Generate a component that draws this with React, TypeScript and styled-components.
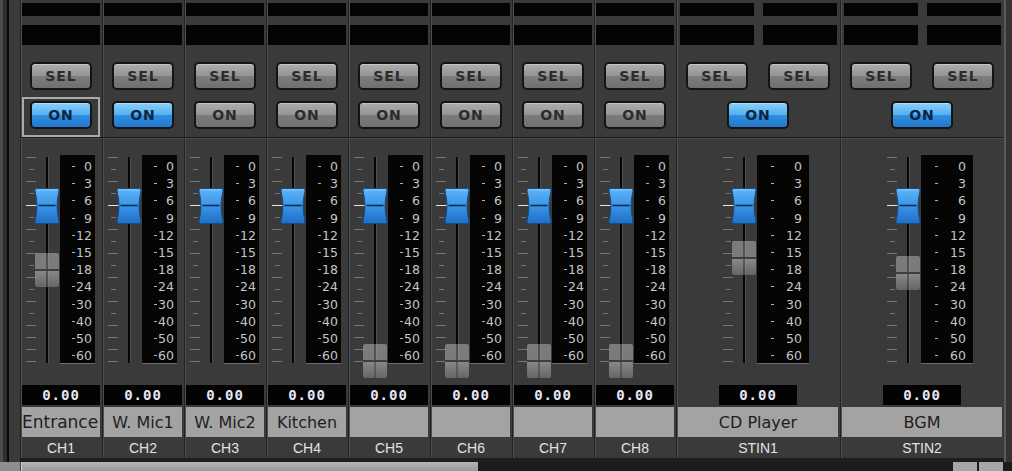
import React from 'react'
import styled, { createGlobalStyle } from 'styled-components'

const GlobalStyle = createGlobalStyle`
  html, body {
    margin: 0;
    padding: 0;
    background: #2a2a2a;
  }
  body {
    font-family: 'DejaVu Sans', sans-serif;
  }
`

const Console = styled.div`
  width: 1012px;
  height: 471px;
  overflow: hidden;
  display: flex;
  flex-direction: column;
  background: #2a2a2a;
`

const Strips = styled.div`
  display: flex;
  height: 462px;
  flex: none;
`

const LeftEdge = styled.div`
  width: 20px;
  flex: none;
  background: linear-gradient(to right, #4c4c4c 0 3px, #2e2e2e 3px 7px, #0a0a0a 7px 9px, #3a3a3a 9px);
`

const RightEdge = styled.div`
  flex: 1;
  background: linear-gradient(to right, #5a5a5a 0 2px, #333 2px);
`

const Strip = styled.div<{ $wide?: boolean }>`
  width: ${p => (p.$wide ? 164 : 82)}px;
  flex: none;
  display: flex;
  flex-direction: column;
  background: #3a3a3a;
  box-shadow: inset 1px 0 0 #232323, inset 2px 0 0 #4e4e4e;
`

const MeterRow = styled.div<{ $wide?: boolean; $h: number; $top: number }>`
  display: flex;
  gap: 9px;
  padding: 0 ${p => (p.$wide ? 3 : 2)}px 0 ${p => (p.$wide ? 4 : 2)}px;
  height: ${p => p.$h}px;
  margin-top: ${p => p.$top}px;
`

const Meter = styled.div`
  flex: 1;
  background: #040404;
`

const ButtonArea = styled.div`
  height: 92px;
  padding-top: 17px;
  box-sizing: border-box;
  display: flex;
  flex-direction: column;
  align-items: center;
`

const SelRow = styled.div`
  align-self: stretch;
  display: grid;
  grid-auto-flow: column;
  grid-auto-columns: 1fr;
  justify-items: center;
`

const PadButton = styled.div<{ $on?: boolean }>`
  width: 62px;
  height: 28px;
  box-sizing: border-box;
  border: 2px solid #141414;
  border-radius: 5px;
  display: flex;
  align-items: center;
  justify-content: center;
  font: bold 14px 'DejaVu Sans', sans-serif;
  letter-spacing: 1px;
  color: ${p => (p.$on ? '#0b2643' : '#2c2c2c')};
  background: ${p =>
    p.$on
      ? 'linear-gradient(#8ad0fa, #55b0f2 48%, #2f8fe2 52%, #2378cc)'
      : 'linear-gradient(#adadad, #959595 48%, #7c7c7c 52%, #707070)'};
  box-shadow: inset 0 1px 0 rgba(255, 255, 255, 0.3);
`

const OnSlot = styled.div<{ $focus?: boolean }>`
  margin-top: 7px;
  width: 78px;
  height: 40px;
  box-sizing: border-box;
  border: 2px solid ${p => (p.$focus ? '#a9a9a9' : 'transparent')};
  display: flex;
  justify-content: center;
  padding-top: 2px;
`

const Divider = styled.div`
  height: 2px;
  background: linear-gradient(#1c1c1c 0 1px, #474747 1px);
`

const FaderArea = styled.div`
  height: 241px;
  display: grid;
  grid-template-columns: 1fr 1fr;
`

const FaderSide = styled.div`
  position: relative;
  display: flex;
  justify-content: flex-end;
  padding: 18px 13px 0 0;
`

const Ticks = styled.div`
  width: 10px;
  margin-right: 10px;
  display: flex;
  flex-direction: column;
  align-items: center;
  gap: 11px;
`

const Tick = styled.div<{ $long?: boolean; $lit?: boolean }>`
  height: 1px;
  width: ${p => (p.$lit ? 12 : p.$long ? 10 : 5)}px;
  align-self: ${p => (p.$lit ? 'flex-start' : 'center')};
  background: ${p => (p.$lit ? '#e4e4e4' : '#767676')};
`

const Track = styled.div`
  width: 2px;
  height: 206px;
  background: #060606;
  box-shadow: 1px 0 0 #505050;
`

const Cap = styled.svg`
  position: absolute;
  right: 1px;
  width: 26px;
  height: 36px;
  margin-top: -18px;
`

const Ghost = styled.div`
  position: absolute;
  right: 2px;
  width: 24px;
  height: 34px;
  margin-top: -17px;
  border-radius: 2px;
  background:
    linear-gradient(to right, transparent 11px, rgba(60, 60, 60, 0.5) 11px 13px, transparent 13px),
    linear-gradient(rgba(180, 180, 180, 0.55), rgba(150, 150, 150, 0.7) 48%, #3e3e3e 48% 53%, rgba(170, 170, 170, 0.7) 53%, rgba(130, 130, 130, 0.6));
  filter: blur(0.6px);
`

const ScaleSide = styled.div`
  padding-top: 16px;
  margin-left: -1px;
`

const Scale = styled.div<{ $w: number }>`
  width: ${p => p.$w}px;
  height: 209px;
  box-sizing: border-box;
  padding-top: 3px;
  background: #050505;
  border-bottom: 1px solid #6c6c6c;
`

const ScaleRow = styled.div<{ $dash: number; $pad: number }>`
  height: 17.2px;
  display: flex;
  align-items: center;
  padding: 0 ${p => p.$pad}px 0 ${p => p.$dash}px;
  font: 12.5px 'DejaVu Sans', sans-serif;
  color: #c4c4c4;
`

const Dash = styled.span`
  width: 3px;
  height: 1px;
  background: #b0b0b0;
`

const Num = styled.span`
  margin-left: auto;
`

const ValueBox = styled.div`
  margin: 5px auto 0;
  width: 78px;
  height: 20px;
  background: #030303;
  display: flex;
  align-items: center;
  justify-content: center;
  font: bold 14px 'DejaVu Sans Mono', monospace;
  color: #e6e6f4;
  letter-spacing: 1px;
`

const NameBox = styled.div`
  margin: 2px 2px 0 2px;
  height: 30px;
  background: #a3a3a3;
  display: flex;
  align-items: center;
  justify-content: center;
  overflow: hidden;
  white-space: nowrap;
  font: 16px 'DejaVu Sans', sans-serif;
  color: #1e1e1e;
`

const NameText = styled.span<{ $left?: boolean }>`
  ${p => (p.$left ? 'margin-right: auto; font-size: 17px;' : '')}
`

const Label = styled.div`
  height: 21px;
  display: flex;
  align-items: center;
  justify-content: center;
  font: 14px 'Liberation Sans', sans-serif;
  color: #e2e2e2;
`

const StripFoot = styled.div`
  height: 4px;
  background: #1e1e1e;
`

const ScrollBar = styled.div`
  height: 9px;
  flex: none;
  display: flex;
  background: #1c1c1c;
`

const ScrollStart = styled.div`
  width: 20px;
  background: #8e8e8e;
  border-right: 1px solid #444;
`

const Thumb = styled.div`
  width: 457px;
  background: linear-gradient(#b6b6b6, #9a9a9a);
  box-shadow: inset 1px 0 0 #d0d0d0;
`

const ScrollGap = styled.div<{ $w?: number }>`
  flex: ${p => (p.$w ? 'none' : '1')};
  width: ${p => p.$w ?? 0}px;
`

const ScrollBtn = styled.div`
  width: 24px;
  margin-left: 2px;
  background: #a6a6a6;
`

type Channel = {
  label: string
  name: string
  on: boolean
  focus?: boolean
  wide?: boolean
  fader: number
  ghost?: number
}

const channels: Channel[] = [
  { label: 'CH1', name: 'Entrance', on: true, focus: true, fader: 67, ghost: 131 },
  { label: 'CH2', name: 'W. Mic1', on: true, fader: 67 },
  { label: 'CH3', name: 'W. Mic2', on: false, fader: 67 },
  { label: 'CH4', name: 'Kitchen', on: false, fader: 67 },
  { label: 'CH5', name: '', on: false, fader: 67, ghost: 222 },
  { label: 'CH6', name: '', on: false, fader: 67, ghost: 222 },
  { label: 'CH7', name: '', on: false, fader: 67, ghost: 222 },
  { label: 'CH8', name: '', on: false, fader: 67, ghost: 222 },
  { label: 'STIN1', name: 'CD Player', on: true, wide: true, fader: 67, ghost: 119 },
  { label: 'STIN2', name: 'BGM', on: true, wide: true, fader: 67, ghost: 134 },
]

const marks = ['0', '3', '6', '9', '12', '15', '18', '24', '30', '40', '50', '60']

const FaderCap = ({ y }: { y: number }) => (
  <Cap viewBox="0 0 26 36" style={{ top: y }}>
    <defs>
      <linearGradient id="capFill" x1="0" y1="0" x2="0" y2="1">
        <stop offset="0" stopColor="#5fb4f6" />
        <stop offset="0.45" stopColor="#3c98ea" />
        <stop offset="1" stopColor="#1e6fc6" />
      </linearGradient>
    </defs>
    <path
      d="M2.5 0.5 H23.5 Q25.5 0.5 25 3 Q21 18 25 33 Q25.5 35.5 23.5 35.5 H2.5 Q0.5 35.5 1 33 Q5 18 1 3 Q0.5 0.5 2.5 0.5 Z"
      fill="url(#capFill)"
      stroke="#174c86"
    />
    <path d="M4.5 17.5 H21.5" stroke="#0b2b52" strokeWidth="1.6" />
    <path d="M3 2 H23" stroke="#9ad4fb" strokeWidth="1" opacity="0.7" />
  </Cap>
)

const ChannelStrip = ({ ch }: { ch: Channel }) => {
  const halves = ch.wide ? [0, 1] : [0]
  return (
    <Strip $wide={ch.wide}>
      <MeterRow $wide={ch.wide} $h={13} $top={3}>
        {halves.map(i => <Meter key={i} />)}
      </MeterRow>
      <MeterRow $wide={ch.wide} $h={20} $top={9}>
        {halves.map(i => <Meter key={i} />)}
      </MeterRow>
      <ButtonArea>
        <SelRow>
          {halves.map(i => (
            <PadButton key={i}>SEL</PadButton>
          ))}
        </SelRow>
        <OnSlot $focus={ch.focus}>
          <PadButton $on={ch.on}>ON</PadButton>
        </OnSlot>
      </ButtonArea>
      <Divider />
      <FaderArea>
        <FaderSide>
          <Ticks>
            {Array.from({ length: 18 }).map((_, i) => (
              <Tick key={i} $long={i % 2 === 0 || i > 13} $lit={i === 4} />
            ))}
          </Ticks>
          <Track />
          {ch.ghost !== undefined && <Ghost style={{ top: ch.ghost }} />}
          <FaderCap y={ch.fader} />
        </FaderSide>
        <ScaleSide>
          <Scale $w={ch.wide ? 52 : 35}>
            {marks.map(m => (
              <ScaleRow key={m} $dash={ch.wide ? 14 : 12} $pad={ch.wide ? 7 : 3}>
                <Dash />
                <Num>{m}</Num>
              </ScaleRow>
            ))}
          </Scale>
        </ScaleSide>
      </FaderArea>
      <ValueBox>0.00</ValueBox>
      <NameBox>
        <NameText $left={ch.name === 'Entrance'}>{ch.name}</NameText>
      </NameBox>
      <Label>{ch.label}</Label>
      <StripFoot />
    </Strip>
  )
}

export default function App() {
  return (
    <>
      <GlobalStyle />
      <Console>
        <Strips>
          <LeftEdge />
          {channels.map(ch => (
            <ChannelStrip key={ch.label} ch={ch} />
          ))}
          <RightEdge />
        </Strips>
        <ScrollBar>
          <ScrollStart />
          <Thumb />
          <ScrollGap />
          <ScrollBtn />
          <ScrollBtn />
          <ScrollGap $w={9} />
        </ScrollBar>
      </Console>
    </>
  )
}
